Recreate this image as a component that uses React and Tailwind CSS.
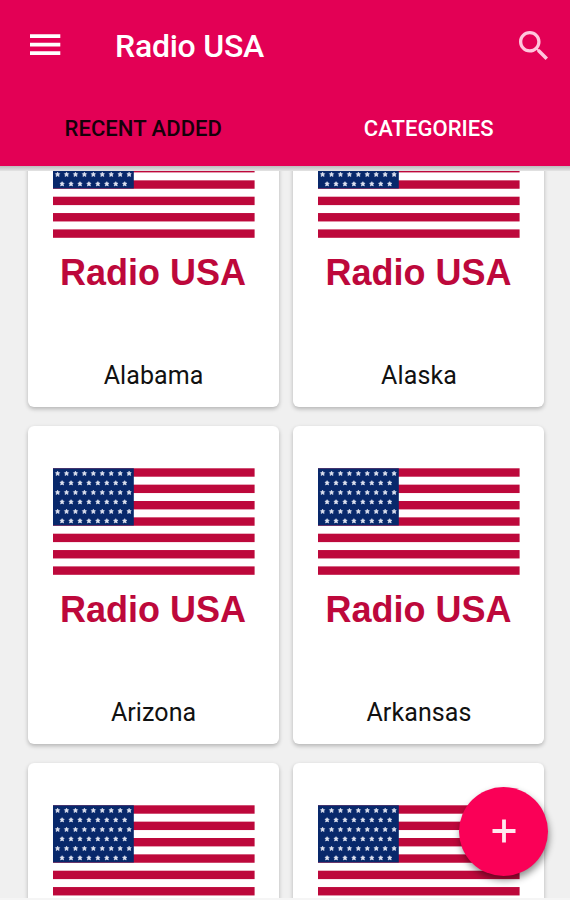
const STATES = ["Alabama", "Alaska", "Arizona", "Arkansas"];

const STARS = [];
for (let row = 0; row < 6; row++) {
  const odd = row % 2 === 1;
  for (let col = 0; col < (odd ? 8 : 9); col++) {
    STARS.push([4.6 + (odd ? 4.5 : 0) + col * 8.94, 5.1 + row * 9.5]);
  }
}

function Flag() {
  return (
    <svg className="block w-full shrink-0" height="108" viewBox="0 0 251 108" aria-hidden="true">
      {[0, 1, 2, 3, 4, 5, 6].map((i) => (
        <rect key={i} x="25" y={i * 16.35 + 0.3} width="201.6" height="8.4" fill="#bd083b" />
      ))}
      <rect x="25" y="0.3" width="80.8" height="57.2" fill="#08286b" />
      {STARS.map(([x, y], i) => (
        <path
          key={i}
          transform={`translate(${x + 25} ${y + 0.3})`}
          d="M0-2.2.7-.9 2.1-.7 1.1.4 1.5 2 0 1.3-1.5 2-1.1.4-2.1-.7-.7-.9Z"
          fill="#dde1ef"
          stroke="#dde1ef"
          strokeWidth="0.7"
        />
      ))}
    </svg>
  );
}

function StateCard({ name }) {
  return (
    <article className="flex h-[317.5px] flex-col rounded-[6px] bg-white pt-[42px] shadow-[0_2px_4px_rgba(0,0,0,0.25)]">
      <Flag />
      {name && (
        <>
          <p className="mt-[14px] pr-[1px] text-center font-['Liberation_Sans',Arial,sans-serif] text-[36px] font-bold leading-[40px] text-[#bd083b]">
            Radio USA
          </p>
          <p className="mt-[66px] text-center text-[25px] leading-[34px] tracking-[0.1px] text-[#111]">{name}</p>
        </>
      )}
    </article>
  );
}

export default function App() {
  return (
    <div className="relative flex h-[900px] w-[570px] flex-col overflow-hidden bg-[#f0f0f0] font-[Roboto,sans-serif]">
      <header className="relative z-10 h-[166px] shrink-0 bg-[#e30055]">
        <div className="flex h-[90px] items-center pl-[30px] pr-[22px]">
          <svg width="31" height="22" viewBox="0 0 31 22" fill="#fff" aria-label="Menu">
            <path d="M0 .3h30.3v3.8H0zM0 8.8h30.3v3.8H0zM0 17.3h30.3v3.8H0z" />
          </svg>
          <h1 className="ml-[54px] mt-px flex-1 text-[32px] font-medium leading-[40px] tracking-[-0.25px] text-white">
            Radio USA
          </h1>
          <svg width="29" height="29" viewBox="3 3 17.49 17.49" fill="#ffc6dd" aria-label="Search">
            <path
              d="M15.5 14h-.79l-.28-.27C15.41 12.59 16 11.11 16 9.5 16 5.91 13.09 3 9.5 3S3 5.91 3 9.5 5.91 16 9.5 16c1.61 0 3.09-.59 4.23-1.57l.27.28v.79l5 4.99L20.49 19l-4.99-5zm-6 0C7.01 14 5 11.99 5 9.5S7.01 5 9.5 5 14 7.01 14 9.5 11.99 14 9.5 14z"
            />
          </svg>
        </div>
        <nav className="grid h-[76px] grid-cols-2 pl-[1px] text-center text-[22px] font-medium leading-[77px] tracking-[0.05px]">
          <span className="text-[#16000a]">RECENT ADDED</span>
          <span className="pl-[2px] text-white">CATEGORIES</span>
        </nav>
        <div className="absolute inset-x-0 top-full h-[5px] bg-linear-to-b from-[#bdbdbd] to-[#e4e4e4]" />
      </header>
      <main className="h-[732px] shrink-0 overflow-hidden">
        <div className="-mt-[77px] grid grid-cols-[251px_251px] gap-x-[14.4px] gap-y-[19.5px] pl-[28.1px]">
          {STATES.map((name) => (
            <StateCard key={name} name={name} />
          ))}
          <StateCard />
          <StateCard />
        </div>
      </main>
      <div className="h-[2px] shrink-0 bg-[#f5f5f5]" />
      <button
        aria-label="Add"
        className="absolute bottom-[24px] right-[22px] flex size-[89px] items-center justify-center rounded-full bg-[#fa0057] shadow-[1px_4px_7px_rgba(0,0,0,0.45)]"
      >
        <svg className="mb-px" width="24" height="24" viewBox="0 0 24 24" fill="#ffe8ee">
          <path d="M10.1.5h3.8v9.6h9.6v3.8h-9.6v9.6h-3.8v-9.6H.5v-3.8h9.6z" />
        </svg>
      </button>
    </div>
  );
}
